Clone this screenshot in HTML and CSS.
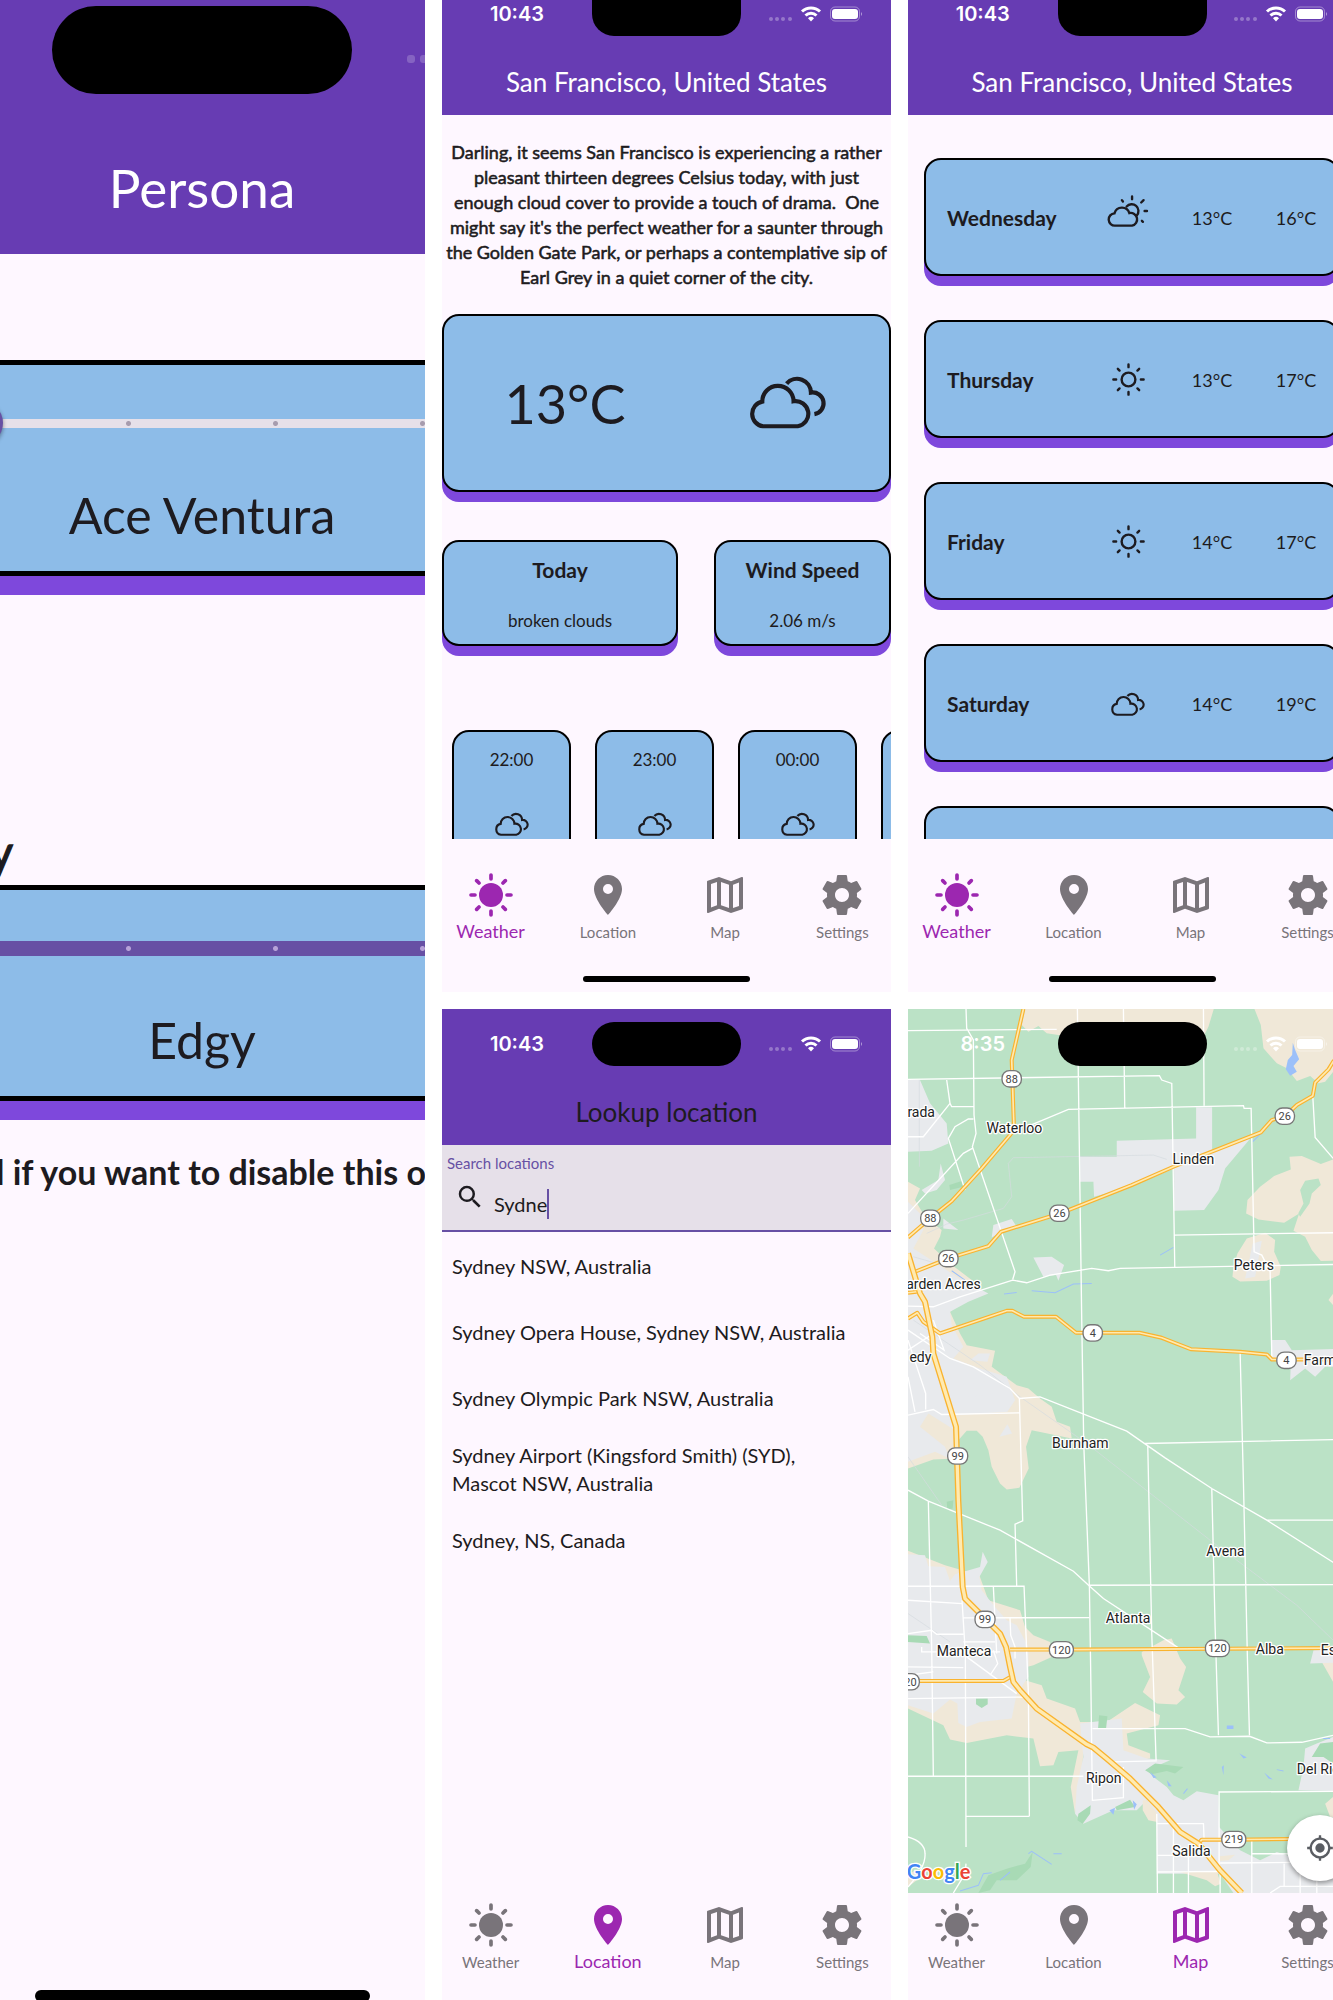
FILE: index.html
```html
<!DOCTYPE html>
<html lang="en">
<head>
<meta charset="utf-8">
<meta name="viewport" content="width=device-width, initial-scale=1">
<title>Weather app screens</title>
<link rel="stylesheet" href="styles.css">
</head>
<body>
<svg class="sprite" aria-hidden="true">
  <symbol id="i-clouds" viewBox="0 0 236 160"><g fill="none" stroke="currentColor" stroke-linecap="butt"><path d="M46 147A36 36 0 0 1 44 76A45 45 0 0 1 134 75A36 36 0 0 1 146 147Z"/><path d="M114 24A40 40 0 0 1 184 50A31 31 0 0 1 194 112"/></g></symbol>
  <symbol id="i-partly" viewBox="0 0 124 98"><g fill="none" stroke="currentColor" stroke-width="7" stroke-linecap="round"><path d="M24 92A18 18 0 0 1 22 56A23 23 0 0 1 66 55A18 18 0 0 1 74 92Z"/><path d="M58 36A18 18 0 1 1 88 62"/><path d="M74 6V14M44 17L47 21M108 17L101 24M111 49H118M103 78L106 81"/></g></symbol>
  <symbol id="i-sun" viewBox="-48 -48 96 96"><g fill="none" stroke="currentColor" stroke-width="7" stroke-linecap="round"><circle r="20"/><path d="M0-44V-36M0 44V36M-44 0H-36M44 0H36M-31-31L-26-26M31-31L26-26M-31 31L-26 26M31 31L26 26"/></g></symbol>
  <symbol id="i-day" viewBox="-72 -72 144 144"><circle r="36" fill="currentColor"/><path d="M0-60V-48M0 60V48M-60 0H-48M60 0H48M-43-43L-36-36M43-43L36-36M-43 43L-36 36M43 43L36 36" fill="none" stroke="currentColor" stroke-width="11" stroke-linecap="round"/></symbol>
  <symbol id="i-pin" viewBox="0 0 24 24"><path fill="currentColor" d="M12 2C8.13 2 5 5.13 5 9c0 5.25 7 13 7 13s7-7.75 7-13c0-3.87-3.13-7-7-7zm0 9.500a2.500 2.500 0 1 1 0-5 2.500 2.500 0 0 1 0 5z"/></symbol>
  <symbol id="i-map" viewBox="0 0 24 24"><path fill="currentColor" d="M20.500 3l-.16.03L15 5.100 9 3 3.360 4.900c-.21.07-.36.25-.36.480V20.500c0 .28.22.5.5.5l.16-.03L9 18.900l6 2.100 5.640-1.900c.21-.07.36-.25.36-.480V3.500c0-.28-.22-.5-.5-.5zM10 5.470l4 1.400v11.660l-4-1.400V5.470zm-5 .990l3-1.010v11.700l-3 1.160V6.460zm14 11.080l-3 1.010V6.860l3-1.160v11.840z"/></symbol>
  <symbol id="i-gear" viewBox="0 0 24 24"><path fill="currentColor" d="M19.430 12.980c.04-.32.07-.64.07-.98s-.03-.66-.07-.98l2.110-1.650c.19-.15.24-.42.12-.64l-2-3.460c-.12-.22-.39-.3-.61-.22l-2.490 1c-.52-.4-1.080-.73-1.690-.98l-.38-2.650C14.460 2.180 14.250 2 14 2h-4c-.25 0-.46.18-.49.42l-.38 2.650c-.61.25-1.170.59-1.690.98l-2.490-1c-.23-.09-.49 0-.61.22l-2 3.460c-.13.22-.07.49.12.64l2.110 1.650c-.04.32-.07.65-.07.98s.03.66.07.98l-2.110 1.650c-.19.15-.24.42-.12.64l2 3.460c.12.22.39.3.61.22l2.490-1c.52.4 1.080.73 1.690.98l.38 2.650c.03.24.24.42.49.42h4c.25 0 .46-.18.49-.42l.38-2.650c.61-.25 1.170-.59 1.690-.98l2.490 1c.23.09.49 0 .61-.22l2-3.460c.12-.22.07-.49-.12-.64l-2.110-1.650zM12 15.500c-1.930 0-3.500-1.570-3.500-3.500s1.570-3.500 3.500-3.500 3.500 1.570 3.500 3.500-1.570 3.500-3.500 3.500z"/></symbol>
  <symbol id="i-search" viewBox="0 0 24 24"><path fill="currentColor" d="M15.500 14h-.79l-.28-.27A6.470 6.470 0 0 0 16 9.500 6.500 6.500 0 1 0 9.500 16c1.610 0 3.090-.59 4.230-1.570l.27.28v.79l5 4.990L20.490 19l-4.990-5zm-6 0C7.010 14 5 11.990 5 9.500S7.010 5 9.500 5 14 7.010 14 9.500 11.990 14 9.500 14z"/></symbol>
  <symbol id="i-locate" viewBox="0 0 24 24"><path fill="currentColor" d="M12 8a4 4 0 1 0 0 8 4 4 0 0 0 0-8zm8.940 3A8.990 8.990 0 0 0 13 3.060V1h-2v2.060A8.990 8.990 0 0 0 3.060 11H1v2h2.060A8.990 8.990 0 0 0 11 20.940V23h2v-2.060A8.990 8.990 0 0 0 20.940 13H23v-2h-2.060zM12 19a7 7 0 1 1 0-14 7 7 0 0 1 0 14z"/></symbol>
  <symbol id="i-status" viewBox="0 0 94 16">
    <g fill="#fff" opacity=".3"><circle cx="2" cy="13" r="2"/><circle cx="8" cy="13" r="2"/><circle cx="14" cy="13" r="2"/><circle cx="21" cy="13" r="2"/></g>
    <g fill="none" stroke="#fff" stroke-width="3"><path d="M33 5.500A13 13 0 0 1 51 5.500"/><path d="M36.500 9.500A8 8 0 0 1 47.500 9.500"/></g><path fill="#fff" d="M39 12.200A4.500 4.500 0 0 1 45 12.200L42 15.500Z"/>
    <rect x="61.500" y="1" width="29" height="14" rx="4.500" fill="none" stroke="#fff" opacity=".4"/><rect x="63" y="3" width="26" height="10" rx="3" fill="#fff"/><path d="M92 6Q94 8 92 10Z" fill="#fff" opacity=".5"/>
  </symbol>
</svg>

<main class="board">
  <section class="frame frame-tall">
    <div class="screen screen-zoom">
      <header class="bar bar-zoom">
        <div class="status-zoom"><span></span><span class="island island-zoom"></span><span class="signal"><i></i><i></i></span></div>
        <h1>Persona</h1>
      </header>
      <div class="persona">
        <div class="card card-zoom">
          <input class="slider" type="range" min="0" max="5" value="1" aria-label="Persona">
          <p>Ace Ventura</p>
        </div>
        <h2>y</h2>
        <div class="card card-zoom">
          <input class="slider slider-full" type="range" min="0" max="5" value="5" aria-label="Tone">
          <p>Edgy</p>
        </div>
        <p class="hint">l if you want to disable this o</p>
      </div>
      <span class="home home-zoom"></span>
    </div>
  </section>

  <section class="frame">
    <div class="screen">
      <header class="bar">
        <div class="status status-cut"><time>10:43</time><span class="island"></span><svg class="icons"><use href="#i-status"/></svg></div>
        <h1>San Francisco, United States</h1>
      </header>
      <div class="content">
        <p class="story">Darling, it seems San Francisco is experiencing a rather<br>pleasant thirteen degrees Celsius today, with just<br>enough cloud cover to provide a touch of drama.&nbsp; One<br>might say it's the perfect weather for a saunter through<br>the Golden Gate Park, or perhaps a contemplative sip of<br>Earl Grey in a quiet corner of the city.</p>
        <div class="card now"><span>13°C</span><svg class="now-icon"><use href="#i-clouds"/></svg></div>
        <div class="facts">
          <div class="card fact"><h2>Today</h2><p>broken clouds</p></div>
          <div class="card fact"><h2>Wind Speed</h2><p>2.06 m/s</p></div>
        </div>
        <div class="hours">
          <div class="card hour"><time>22:00</time><svg><use href="#i-clouds"/></svg></div>
          <div class="card hour"><time>23:00</time><svg><use href="#i-clouds"/></svg></div>
          <div class="card hour"><time>00:00</time><svg><use href="#i-clouds"/></svg></div>
          <div class="card hour"></div>
        </div>
      </div>
      <nav class="tabs tabs-home">
        <a class="active" href="#weather"><svg><use href="#i-day"/></svg>Weather</a>
        <a href="#location"><svg><use href="#i-pin"/></svg>Location</a>
        <a href="#map"><svg><use href="#i-map"/></svg>Map</a>
        <a href="#settings"><svg><use href="#i-gear"/></svg>Settings</a>
      </nav>
      <span class="home"></span>
    </div>
  </section>

  <section class="frame">
    <div class="screen screen-wide">
      <header class="bar">
        <div class="status status-cut"><time>10:43</time><span class="island"></span><svg class="icons"><use href="#i-status"/></svg></div>
        <h1>San Francisco, United States</h1>
      </header>
      <div class="content">
        <ul class="days">
          <li class="card day"><b>Wednesday</b><svg class="partly"><use href="#i-partly"/></svg><span>13°C</span><span>16°C</span></li>
          <li class="card day"><b>Thursday</b><svg class="sunny"><use href="#i-sun"/></svg><span>13°C</span><span>17°C</span></li>
          <li class="card day"><b>Friday</b><svg class="sunny"><use href="#i-sun"/></svg><span>14°C</span><span>17°C</span></li>
          <li class="card day"><b>Saturday</b><svg class="cloudy"><use href="#i-clouds"/></svg><span>14°C</span><span>19°C</span></li>
          <li class="card day"></li>
        </ul>
      </div>
      <nav class="tabs tabs-home">
        <a class="active" href="#weather"><svg><use href="#i-day"/></svg>Weather</a>
        <a href="#location"><svg><use href="#i-pin"/></svg>Location</a>
        <a href="#map"><svg><use href="#i-map"/></svg>Map</a>
        <a href="#settings"><svg><use href="#i-gear"/></svg>Settings</a>
      </nav>
      <span class="home"></span>
    </div>
  </section>

  <section class="frame">
    <div class="screen">
      <header class="bar bar-search">
        <div class="status"><time>10:43</time><span class="island"></span><svg class="icons"><use href="#i-status"/></svg></div>
        <h1>Lookup location</h1>
      </header>
      <div class="search">
        <label for="q">Search locations</label>
        <div class="search-row"><svg><use href="#i-search"/></svg><input id="q" type="text" value="Sydne"><i class="caret"></i></div>
      </div>
      <div class="content">
        <ul class="places">
          <li>Sydney NSW, Australia</li>
          <li>Sydney Opera House, Sydney NSW, Australia</li>
          <li>Sydney Olympic Park NSW, Australia</li>
          <li>Sydney Airport (Kingsford Smith) (SYD),<br>Mascot NSW, Australia</li>
          <li>Sydney, NS, Canada</li>
        </ul>
      </div>
      <nav class="tabs">
        <a href="#weather"><svg><use href="#i-day"/></svg>Weather</a>
        <a class="active" href="#location"><svg><use href="#i-pin"/></svg>Location</a>
        <a href="#map"><svg><use href="#i-map"/></svg>Map</a>
        <a href="#settings"><svg><use href="#i-gear"/></svg>Settings</a>
      </nav>
    </div>
  </section>

  <section class="frame">
    <div class="screen screen-wide">
      <div class="content map">
        <svg class="map-art" viewBox="24 27 1344 2651" preserveAspectRatio="xMinYMin slice">
          <g fill="#f0e8d8">
            <path d="M375 27L365 75 385 95 415 78 440 100 475 105 600 140H850L910 110 925 80 941 27Z"/>
            <path d="M1063 27L1082 75 1090 145 1130 190 1160 205 1190 243 1230 228 1255 250 1275 245 1299 215 1368 200V27Z"/>
            <path fill-rule="evenodd" d="M1168 470L1205 468 1262 492 1299 478H1368V780L1262 783 1235 750 1215 710 1180 692 1197 640 1152 668 1075 658 1038 640 1042 600 1080 560 1122 528 1172 508ZM1200 570L1210 610 1194 640 1200 650 1228 610 1235 580 1262 555 1255 535 1215 542Z"/>
            <path d="M997 830L1000 800 1012 760 1040 715 1095 698 1125 720 1122 755 1142 800 1138 825 1100 842 1020 844Z"/>
            <path d="M1285 900L1299 880H1368V915H1299Z"/>
            <path d="M24 545L60 565 45 600 75 650 125 690 120 710 102 745 150 790 215 840 240 865 150 935 180 1000 200 1035 285 1052 275 1100 350 1155 385 1165 420 1195 455 1220 470 1265 510 1280 515 1315 395 1290 378 1340 386 1405 358 1463 320 1468 300 1450 275 1400 265 1350 248 1310 230 1292 200 1292 175 1320 150 1376 100 1378 24 1405Z"/>
            <path d="M24 1652L135 1695 238 1725 265 1800 360 1830 375 1880 400 1905 450 1925 455 1970 400 1995 380 2000 375 2040 425 2055 440 2095 525 2125 540 2165H620L705 2108 780 2145 775 2175 680 2200 685 2235 750 2260V2275L640 2290 550 2250 545 2340 525 2440 512 2360 535 2250 475 2255 460 2295 420 2298 400 2215 320 2205 200 2228 150 2218 130 2175 24 2125Z"/>
            <path d="M725 1955L790 1920 815 1915 840 1975 858 2000 835 2070 855 2090 830 2113 770 2110 728 2075 750 2030 725 1965Z"/>
            <path d="M1265 1985H1368V2080L1299 2045ZM1275 2410L1299 2390H1368V2450H1290ZM24 2625L45 2610 50 2640 24 2660Z"/>
          </g>
          <g fill="#e8eaed">
            <path d="M24 240H60L90 310 140 370 145 430 95 452 24 455ZM122 490L135 540 110 570 75 580 65 570 115 540ZM275 712L280 675 335 657 350 680 305 695ZM400 772L455 770 492 795 475 842 468 825 430 830ZM130 655L175 690 130 685Z"/>
            <path d="M540 470H650V422L888 415V322H936V450L1055 410 975 505 955 570 912 630 822 632V505L690 560 582 590 580 545H540Z"/>
            <path d="M24 605L60 640 70 690 40 745 110 790 170 830 265 880 205 905 150 935 155 975 190 1040 160 1075 240 1105 320 1130 345 1200 322 1235 165 1245 165 1290 85 1240 60 1280 135 1340 150 1376 105 1355 24 1385Z"/>
            <path d="M210 1080L235 1060 270 1060 262 1085ZM298 1310L322 1272 336 1300ZM150 1160L280 1140 285 1180 170 1195Z"/>
            <path d="M24 1662L75 1665 85 1698 135 1700 150 1742 165 1722 240 1700 248 1655 263 1685 238 1730 245 1770 285 1820 320 1860 350 1875 385 1940V2030L350 2080 335 2155 240 2165 200 2180 175 2168 172 2110 150 2098 100 2140 24 2115Z"/>
            <path d="M540 2170L665 2155 670 2250 740 2275 810 2280 740 2310 760 2330 800 2360 820 2385 850 2400 890 2373 955 2385 957 2480 1020 2550 1080 2580 1130 2555 1160 2565 1299 2600H1368V2678H1000L960 2620H770V2460L740 2400 710 2430 640 2430 550 2470 525 2440 530 2360 550 2270Z"/>
            <path d="M1215 2245L1250 2230 1299 2210H1368V2373L1195 2370 1210 2300ZM1240 1950L1368 1945V1985L1230 1990ZM1115 1020H1155L1175 1050 1368 1045V1125L1299 1100 1275 1100 1245 1130 1215 1105 1170 1140 1172 1090 1115 1075ZM1058 730L1085 722 1065 830 1035 835Z"/>
          </g>
          <g fill="#f0e8d8"><path d="M728 2400L740 2400 772 2440V2465L745 2460 728 2430ZM840 2615L950 2612 962 2650 945 2658 920 2640ZM958 2568L1005 2563 985 2580 960 2582Z"/></g>
          <g fill="#a8dab5">
            <path d="M148 555L185 543 190 560 150 570ZM140 1505L160 1500 158 1525 142 1528ZM228 2095H263V2112L245 2123 228 2112ZM597 2145L622 2148 618 2185H594ZM735 2310L765 2290 850 2300 825 2320 800 2312 755 2322ZM645 2420L690 2398 705 2420 650 2430ZM535 2440L572 2415 570 2440 548 2470 532 2460ZM24 1905L80 1907 90 1930 24 1925Z"/>
            <path d="M235 2678L265 2625 320 2605 375 2590 398 2555 392 2600 350 2640 290 2640 270 2670ZM1235 2270L1260 2230 1299 2225V2290L1270 2270Z"/>
          </g>
          <g fill="#9cc0f9"><path d="M1178 128L1185 150 1197 178 1180 198 1190 215 1170 227 1157 208 1163 180 1176 165ZM980 2176H1000V2186H980ZM1018 2260L1040 2272 1030 2275ZM965 2300L971 2295 970 2325ZM1092 2317L1118 2338 1105 2335ZM628 2430L645 2422 640 2443ZM698 2400L710 2412 702 2428ZM750 2315L770 2332 760 2333ZM800 2340L815 2358 805 2358Z"/></g>
          <g fill="none" stroke="#9cc0f9" stroke-width="3"><path d="M155 812L195 840M312 882L350 877M395 872L465 878 520 852 575 850M780 765L820 742M1058 425L1085 398M180 2672L235 2655 250 2620 275 2617M385 2560L395 2553 455 2592M300 2640L330 2615M460 2560H485M850 2380L862 2365M1130 2308L1150 2312M1268 2215H1290"/></g>
          <g fill="none" stroke="#d5dbe0" stroke-width="2"><path d="M58 240V500M190 660L310 625 335 590 325 490 340 473 760 465 800 478M40 960L240 1095 360 1190 560 1330 930 1620 1030 1695 1190 1815 1299 1920M24 1370L125 1515M24 1840L150 1925M80 700L140 672 190 660M40 770L110 790"/></g>
          <g class="roads">
            <path d="M24 92L470 88M198 27L200 85 220 120 222 345 228 400 217 440 345 815 338 838M24 238L778 227 785 240 815 250 824 800M532 27L545 960 551 1330 568 1760 572 2020 577 2400 670 2392V2300M670 27L674 323M910 27L912 317M385 378L505 328 1030 317 1032 325H1053L1062 755 1085 765 1110 815 1115 1070M338 840L380 848 450 825 575 805 625 812 660 805 1368 792M822 705L1368 697M1238 290L1245 412 1299 475M24 640L190 460 217 445M24 410H70L150 310 140 240M150 310L155 320H220M195 570L145 415 165 380 205 357H220M24 918L100 920 180 890 338 840"/>
            <path d="M24 990L150 1075 220 1100 330 1165 358 1195 420 1190 680 1293 795 1373 935 1465 1100 1560 1368 1730M735 1330L1368 1317M743 1335L755 1900 768 2280M1020 1057L1030 1450 1042 1980 1048 2205M935 1465L945 1880 955 2205M1100 1560H1368M24 1470L85 1503 300 1590 520 1713 568 1757 610 1795 835 1943M568 1755L1368 1753M358 1195L368 1562 345 1572 350 1758M24 1758H372L385 2080 388 2448M24 1245L100 1228 125 1243 358 1238M77 1228V1180L24 1020M60 1000L132 1050 100 960M24 1050L100 1000M24 1130L45 1235M85 1503L95 1940 100 2328M24 2328H550M186 1800L196 1960 198 2540M198 2590L195 2620 160 2678M198 2448H388M24 1800L186 1810M24 1900L95 1890 110 1902H190M190 1853L568 1852M190 1925H285M280 1760L290 1960M330 1855L332 1905 345 1940V1975M24 2095L385 2090M24 2000L190 2002M200 1970L350 2080M65 1940V1955H300M24 2025L100 2015M280 1950L293 1990 270 2025"/>
            <path d="M577 2185H855L930 2210 1048 2208 1100 2228 1205 2226 1299 2205M640 2285L770 2282M770 2440L772 2678M770 2470H910L912 2520M770 2565H880M770 2615L960 2613V2678M957 2600V2375L1368 2373M820 2470V2678M865 2560V2678M1055 2520V2678M1055 2560L1368 2562M960 2588L1368 2585M1110 2678L1140 2658H1299M1152 2590V2658M1200 2590V2678M1250 2640V2678M24 2510Q75 2525 75 2560Q78 2600 24 2660"/>
          </g>
          <g class="hw-edge">
            <path d="M370 27L335 180 342 390 330 405 245 505 155 603 90 655 24 712M45 815L145 775 265 738 303 695 480 640 695 555 820 500 1082 397 1115 360 1155 348 1190 315 1238 287 1245 248 1285 208 1299 185 1368 120"/>
            <path d="M24 955L52 938 70 965 120 1000 320 932H337L372 950H468L528 998H718L785 1013 872 1047 1020 1055 1100 1063 1115 1078H1368M24 878L50 875"/>
            <path d="M330 1948H530L1368 1943M24 2042H310L340 2025M895 2530L905 2518H1000L1368 2514"/>
          </g>
          <g class="hw-core">
            <path d="M370 27L335 180 342 390 330 405 245 505 155 603 90 655 24 712M45 815L145 775 265 738 303 695 480 640 695 555 820 500 1082 397 1115 360 1155 348 1190 315 1238 287 1245 248 1285 208 1299 185 1368 120"/>
            <path d="M24 955L52 938 70 965 120 1000 320 932H337L372 950H468L528 998H718L785 1013 872 1047 1020 1055 1100 1063 1115 1078H1368M24 878L50 875"/>
            <path d="M330 1948H530L1368 1943M24 2042H310L340 2025M895 2530L905 2518H1000L1368 2514"/>
          </g>
          <path class="hw-edge wide" d="M24 760L60 880 75 905 97 1010 100 1060 168 1280 175 1500 188 1760 195 1795 255 1855 300 1900 318 1940 330 2000 340 2045 360 2070 410 2125 560 2232 580 2242 620 2275 690 2335 775 2420 840 2495 895 2530 960 2610 1025 2678"/>
          <path class="hw-core wide" d="M24 760L60 880 75 905 97 1010 100 1060 168 1280 175 1500 188 1760 195 1795 255 1855 300 1900 318 1940 330 2000 340 2045 360 2070 410 2125 560 2232 580 2242 620 2275 690 2335 775 2420 840 2495 895 2530 960 2610 1025 2678"/>
          <g class="shields">
            <rect x="306" y="212" width="58" height="49" rx="22"/><rect x="62" y="630" width="58" height="49" rx="22"/><rect x="449" y="615" width="58" height="49" rx="22"/><rect x="116" y="751" width="58" height="49" rx="22"/><rect x="1125" y="324" width="58" height="49" rx="22"/><rect x="549" y="974" width="58" height="49" rx="22"/><rect x="1130" y="1056" width="58" height="49" rx="22"/><rect x="143" y="1343" width="60" height="49" rx="22"/><rect x="225" y="1833" width="60" height="49" rx="22"/><rect x="448" y="1924" width="72" height="49" rx="22"/><rect x="916" y="1920" width="72" height="49" rx="22"/><rect x="-14" y="2020" width="72" height="49" rx="22"/><rect x="965" y="2493" width="72" height="49" rx="22"/>
          </g>
          <g class="shield-text">
            <text x="335" y="248">88</text><text x="91" y="666">88</text><text x="478" y="651">26</text><text x="145" y="787">26</text><text x="1154" y="360">26</text><text x="578" y="1010">4</text><text x="1159" y="1092">4</text><text x="173" y="1379">99</text><text x="255" y="1869">99</text><text x="484" y="1960">120</text><text x="952" y="1956">120</text><text x="22" y="2056">120</text><text x="1001" y="2529">219</text>
          </g>
          <g class="towns">
            <text x="343" y="399">Waterloo</text><text x="880" y="492">Linden</text><text x="1061" y="810">Peters</text><text x="541" y="1345">Burnham</text><text x="976" y="1667">Avena</text><text x="684" y="1869">Atlanta</text><text x="192" y="1966">Manteca</text><text x="1109" y="1962">Alba</text><text x="611" y="2347">Ripon</text><text x="874" y="2568">Salida</text>
            <g class="from-start"><text x="1211" y="1094">Farm</text><text x="1262" y="1965">Es</text><text x="1190" y="2320">Del Rio</text></g>
            <g class="from-end"><text x="105" y="350">rada</text><text x="242" y="867">arden Acres</text><text x="94" y="1085">edy</text></g>
          </g>
          <text class="brand" x="20" y="2636"><tspan fill="#4285f4">G</tspan><tspan fill="#ea4335">o</tspan><tspan fill="#fbbc05">o</tspan><tspan fill="#4285f4">g</tspan><tspan fill="#34a853">l</tspan><tspan fill="#ea4335">e</tspan></text>
        </svg>
        <div class="status status-over"><time>8:35</time><span class="island"></span><svg class="icons"><use href="#i-status"/></svg></div>
        <button class="locate" type="button" aria-label="My location"><svg><use href="#i-locate"/></svg></button>
      </div>
      <nav class="tabs">
        <a href="#weather"><svg><use href="#i-day"/></svg>Weather</a>
        <a href="#location"><svg><use href="#i-pin"/></svg>Location</a>
        <a class="active" href="#map"><svg><use href="#i-map"/></svg>Map</a>
        <a href="#settings"><svg><use href="#i-gear"/></svg>Settings</a>
      </nav>
    </div>
  </section>
</main>
</body>
</html>
```
FILE: styles.css
```css
* { box-sizing: border-box; }

:root {
  --purple: #673cb3;
  --shadow: #7e48dc;
  --sky: #8dbce8;
  --surface: #fef7ff;
  --ink: #1d1b20;
  --accent: #9c27b0;
  --muted: #79747a;
  --primary: #6750a4;
}

body { margin: 0; background: #fff; color: var(--ink); font-family: Lato, "Liberation Sans", sans-serif; }
h1, h2, p, ul { margin: 0; padding: 0; font-weight: 400; }
ul { list-style: none; }
.sprite { position: absolute; width: 0; height: 0; }

.board {
  display: grid;
  grid-template-columns: 425fr 449fr 425fr;
  grid-template-rows: minmax(0, 992fr) minmax(0, 991fr);
  gap: 17px;
  height: 100vh;
}
.frame { display: flex; min-width: 0; overflow: hidden; background: var(--surface); }
.frame-tall { grid-row: span 2; }
.screen { flex: 1; display: flex; flex-direction: column; min-width: 0; }
.screen-wide { margin-right: -23px; }
.content { flex: 1; min-height: 0; overflow: hidden; }

/* app bar and phone status row */
.bar { background: var(--purple); color: #fff; height: 115px; display: flex; flex-direction: column; text-align: center; }
.bar h1 { font-size: 26px; line-height: 32px; margin-top: 30px; }
.bar-search { height: 136px; padding-top: 13px; }
.bar-search h1 { color: var(--ink); }
.status { display: grid; grid-template-columns: 1fr 149px 1fr; align-items: center; justify-items: center; color: #fff; }
.status time { font: 600 20px/24px Inter, "Liberation Sans", sans-serif; }
.status .icons { width: 94px; height: 16px; }
.island { width: 149px; height: 44px; border-radius: 22px; background: #000; }
.status-cut { height: 36px; overflow: hidden; align-items: start; }
.status-cut .island { height: 36px; border-radius: 0 0 22px 22px; }
.status-cut time { margin-top: 2px; }
.status-cut .icons { margin-top: 6px; }
.status-over { position: absolute; top: 13px; left: 0; right: 0; }

/* cards */
.card { background: var(--sky); border: 2px solid #000; border-radius: 17px; box-shadow: 0 10px 0 var(--shadow); }

.story { margin-top: 25px; font-size: 18px; line-height: 25px; text-align: center; white-space: nowrap; -webkit-text-stroke: 0.03em; }
.now { margin-top: 24px; height: 178px; display: flex; align-items: center; justify-content: space-around; font-size: 54px; }
.now-icon { width: 82px; height: 56px; stroke-width: 12px; }
.facts { display: grid; grid-template-columns: 236fr 177fr; gap: 36px; margin-top: 48px; }
.fact { height: 106px; padding-top: 13px; text-align: center; }
.fact h2, .day b { font-size: 21px; line-height: 30px; font-weight: 700; }
.fact p { margin-top: 24px; font-size: 17px; line-height: 24px; }
.hours { display: flex; gap: 24px; padding: 84px 0 0 10px; }
.hour { flex: none; width: 119px; height: 160px; padding-top: 16px; display: flex; flex-direction: column; align-items: center; gap: 40px; font-size: 17px; line-height: 24px; }
.hour svg, .cloudy { width: 36px; height: 25px; stroke-width: 14px; }

.days { display: grid; gap: 44px; padding: 43px 16px 0; }
.day { height: 118px; padding: 2px 0 0 21px; display: grid; grid-template-columns: 1fr 84px 84px 84px; align-items: center; justify-items: center; font-size: 18px; }
.day b { justify-self: start; }
.partly { width: 42px; height: 34px; margin-bottom: 14px; }
.sunny { width: 33px; height: 33px; margin-bottom: 2px; }

/* bottom navigation */
.tabs { height: 107px; margin: 0 -10px; padding-top: 8px; display: grid; grid-template-columns: repeat(4, 1fr); }
.tabs a { display: flex; flex-direction: column; align-items: center; color: var(--muted); font-size: 15px; line-height: 26px; text-decoration: none; }
.tabs svg { width: 48px; height: 48px; }
.tabs .active { color: var(--accent); font-size: 18px; line-height: 24px; }
.tabs-home { height: 137px; padding-top: 32px; }
.home { align-self: center; width: 167px; height: 6px; margin-bottom: 10px; border-radius: 3px; background: #000; }

/* place search */
.search { background: #e6e0e9; border-bottom: 2px solid var(--primary); height: 87px; padding: 8px 5px 0; }
.search label { display: block; font-size: 15px; line-height: 20px; color: var(--primary); }
.search-row { display: flex; align-items: center; padding: 16px 0 0 8px; }
.search-row svg { width: 30px; height: 30px; margin: -15px 9px 0 0; }
.search-row input { width: 53px; height: 30px; padding: 0; border: 0; background: none; color: var(--ink); font: 20px/30px Lato, "Liberation Sans", sans-serif; outline: 0; }
.caret { width: 2px; height: 30px; background: var(--primary); }
.places { padding: 1px 10px 0; font-size: 20px; line-height: 28px; }
.places li { min-height: 66px; padding: 10px 0; display: flow-root; align-content: center; }

/* map */
.map { position: relative; background: #bbe2c6; }
.map-art { display: block; width: 100%; height: 100%; }
.roads { fill: none; stroke: #fff; stroke-width: 4; }
.hw-edge { fill: none; stroke: #f9b32f; stroke-width: 12; stroke-linejoin: round; }
.hw-core { fill: none; stroke: #ffeab0; stroke-width: 5; stroke-linejoin: round; }
.hw-edge.wide { stroke-width: 18; }
.hw-core.wide { stroke-width: 10; }
.shields rect { fill: #fff; stroke: #777; stroke-width: 4; }
.shield-text { font: 33px Roboto, sans-serif; fill: #444; text-anchor: middle; }
.towns { font: 42px Roboto, sans-serif; fill: #222; text-anchor: middle; stroke: #fff; stroke-width: 8; stroke-linejoin: round; paint-order: stroke; }
.from-start { text-anchor: start; }
.from-end { text-anchor: end; }
.brand { font: 700 60px Lato, sans-serif; stroke: #fff; stroke-width: 8; paint-order: stroke; }
.locate { position: absolute; right: 3px; bottom: 12px; width: 66px; height: 66px; padding: 0; border: 0; border-radius: 50%; background: #fff; color: #5a5d62; box-shadow: 0 2px 5px #0006; display: grid; place-items: center; }
.locate svg { width: 28px; height: 28px; }

/* enlarged persona screen */
.screen-zoom { margin: 0 -228px 0 -249px; text-align: center; }
.bar-zoom { height: 254px; padding-top: 6px; }
.bar-zoom h1 { font-size: 53px; line-height: 64px; margin-top: 62px; }
.status-zoom { display: grid; grid-template-columns: 1fr 300px 1fr; align-items: center; }
.island-zoom { width: 300px; height: 88px; border-radius: 44px; }
.signal { display: flex; gap: 5px; padding: 18px 0 0 55px; }
.signal i { width: 8px; height: 8px; border-radius: 3px; background: #fff3; }
.persona { flex: 1; padding-top: 106px; }
.card-zoom { height: 216px; border-width: 5px; border-radius: 34px; box-shadow: 0 19px 0 var(--shadow); padding: 36px 56px 0; font-size: 50px; line-height: 60px; }
.card-zoom p { margin-top: 40px; }
.persona h2 { width: 262px; margin-top: 243px; font-size: 46px; line-height: 66px; text-align: right; -webkit-text-stroke: 0.03em; }
.hint { margin: 51px 0 0 245px; font-size: 34px; line-height: 40px; font-weight: 700; text-align: left; white-space: nowrap; }
.home-zoom { width: 335px; height: 12px; margin-bottom: -2px; border-radius: 6px; }

.slider { -webkit-appearance: none; appearance: none; display: block; width: 100%; height: 44px; margin: 0; background: none; }
.slider::-webkit-slider-runnable-track {
  height: 9px;
  border-radius: 4px;
  background: radial-gradient(circle, #a79cae 2px, #0000 3px) -51px 0 / 147px 100%, #e6e0e9;
}
.slider-full::-webkit-slider-runnable-track {
  height: 15px;
  border-radius: 8px;
  background: radial-gradient(circle, #b7a2d8 2px, #0000 3px) -51px 0 / 147px 100%, var(--primary);
}
.slider::-webkit-slider-thumb { -webkit-appearance: none; width: 44px; height: 44px; margin-top: -18px; border-radius: 50%; background: var(--primary); box-shadow: 0 2px 4px #0006; }
.slider-full::-webkit-slider-thumb { margin-top: -14px; }
```
